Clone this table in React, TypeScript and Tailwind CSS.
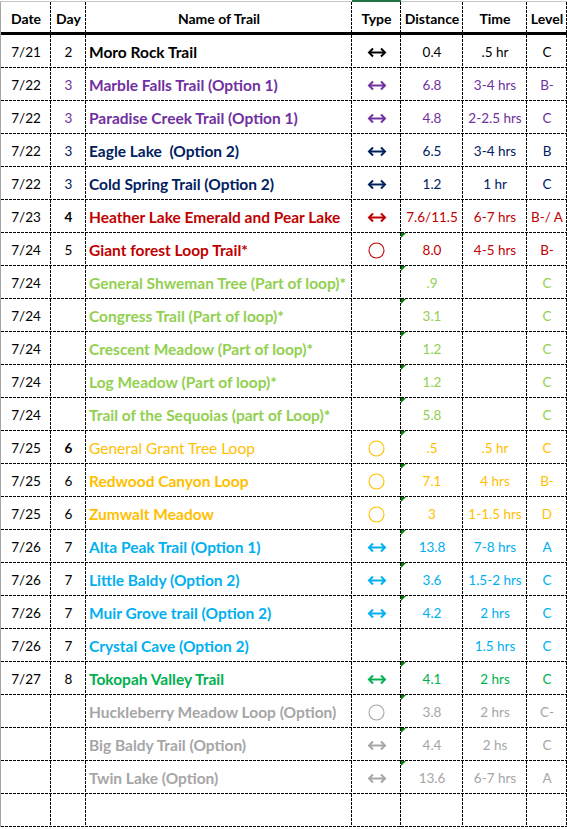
import React from "react";

type Row = {
  date?: string;
  day?: string;
  dayColor?: string;
  dayBold?: boolean;
  name?: string;
  nameNormal?: boolean;
  type?: "arrow" | "circle";
  dist?: string;
  time?: string;
  level?: string;
  color: string;
  tri?: boolean;
};

const PURPLE = "#7030A0";
const NAVY = "#002060";
const RED = "#C00000";
const LGREEN = "#92D050";
const GOLD = "#FFC000";
const LBLUE = "#00B0F0";
const GREEN = "#00B050";
const GREY = "#A6A6A6";

const rows: Row[] = [
  { date: "7/21", day: "2", dayColor: "#000", name: "Moro Rock Trail", type: "arrow", dist: "0.4", time: ".5 hr", level: "C", color: "#000" },
  { date: "7/22", day: "3", dayColor: PURPLE, name: "Marble Falls Trail (Option 1)", type: "arrow", dist: "6.8", time: "3-4 hrs", level: "B-", color: PURPLE },
  { date: "7/22", day: "3", dayColor: PURPLE, name: "Paradise Creek Trail (Option 1)", type: "arrow", dist: "4.8", time: "2-2.5 hrs", level: "C", color: PURPLE },
  { date: "7/22", day: "3", dayColor: NAVY, name: "Eagle Lake  (Option 2)", type: "arrow", dist: "6.5", time: "3-4 hrs", level: "B", color: NAVY },
  { date: "7/22", day: "3", dayColor: NAVY, name: "Cold Spring Trail (Option 2)", type: "arrow", dist: "1.2", time: "1 hr", level: "C", color: NAVY },
  { date: "7/23", day: "4", dayColor: "#000", dayBold: true, name: "Heather Lake Emerald and Pear Lake", type: "arrow", dist: "7.6/11.5", time: "6-7 hrs", level: "B-/ A", color: RED },
  { date: "7/24", day: "5", dayColor: "#000", name: "Giant forest Loop Trail*", type: "circle", dist: "8.0", time: "4-5 hrs", level: "B-", color: RED, tri: true },
  { date: "7/24", name: "General Shweman Tree (Part of loop)*", dist: ".9", level: "C", color: LGREEN, tri: true },
  { date: "7/24", name: "Congress Trail (Part of loop)*", dist: "3.1", level: "C", color: LGREEN, tri: true },
  { date: "7/24", name: "Crescent Meadow (Part of loop)*", dist: "1.2", level: "C", color: LGREEN, tri: true },
  { date: "7/24", name: "Log Meadow (Part of loop)*", dist: "1.2", level: "C", color: LGREEN, tri: true },
  { date: "7/24", name: "Trail of the Sequoias (part of Loop)*", dist: "5.8", level: "C", color: LGREEN, tri: true },
  { date: "7/25", day: "6", dayColor: "#000", dayBold: true, name: "General Grant Tree Loop", nameNormal: true, type: "circle", dist: ".5", time: ".5 hr", level: "C", color: GOLD, tri: true },
  { date: "7/25", day: "6", dayColor: "#000", name: "Redwood Canyon Loop", type: "circle", dist: "7.1", time: "4 hrs", level: "B-", color: GOLD, tri: true },
  { date: "7/25", day: "6", dayColor: "#000", name: "Zumwalt Meadow", type: "circle", dist: "3", time: "1-1.5 hrs", level: "D", color: GOLD, tri: true },
  { date: "7/26", day: "7", dayColor: "#000", name: "Alta Peak Trail (Option 1)", type: "arrow", dist: "13.8", time: "7-8 hrs", level: "A", color: LBLUE, tri: true },
  { date: "7/26", day: "7", dayColor: "#000", name: "Little Baldy (Option 2)", type: "arrow", dist: "3.6", time: "1.5-2 hrs", level: "C", color: LBLUE, tri: true },
  { date: "7/26", day: "7", dayColor: "#000", name: "Muir Grove trail (Option 2)", type: "arrow", dist: "4.2", time: "2 hrs", level: "C", color: LBLUE, tri: true },
  { date: "7/26", day: "7", dayColor: "#000", name: "Crystal Cave (Option 2)", time: "1.5 hrs", level: "C", color: LBLUE },
  { date: "7/27", day: "8", dayColor: "#000", name: "Tokopah Valley Trail", type: "arrow", dist: "4.1", time: "2 hrs", level: "C", color: GREEN, tri: true },
  { name: "Huckleberry Meadow Loop (Option)", type: "circle", dist: "3.8", time: "2 hrs", level: "C-", color: GREY, tri: true },
  { name: "Big Baldy Trail (Option)", type: "arrow", dist: "4.4", time: "2 hs", level: "C", color: GREY, tri: true },
  { name: "Twin Lake (Option)", type: "arrow", dist: "13.6", time: "6-7 hrs", level: "A", color: GREY, tri: true },
  { color: "#000" },
];

const vline =
  "bg-[image:repeating-linear-gradient(to_bottom,#000_0_3px,transparent_3px_4px)] bg-[length:1px_100%] bg-right bg-no-repeat";
const hline =
  "bg-[image:repeating-linear-gradient(to_right,#000_0_3px,transparent_3px_4px)] bg-[length:100%_1px] bg-bottom bg-no-repeat";

function Arrow({ color }: { color: string }) {
  return (
    <svg width="20" height="11" viewBox="0 0 20 11" fill="none" stroke={color} strokeWidth="2" strokeLinecap="butt" strokeLinejoin="miter">
      <line x1="2" y1="5.5" x2="18" y2="5.5" />
      <polyline points="6,1.5 2,5.5 6,9.5" />
      <polyline points="14,1.5 18,5.5 14,9.5" />
    </svg>
  );
}

function Circle({ color }: { color: string }) {
  return (
    <svg width="17" height="17" viewBox="0 0 17 17" fill="none" stroke={color} strokeWidth="1.1">
      <circle cx="8.5" cy="8.5" r="7.5" />
    </svg>
  );
}

const colCls = {
  date: "w-[50px]",
  day: "w-[35px]",
  name: "w-[266px]",
  type: "w-[49px]",
  dist: "w-[62px]",
  time: "w-[64px]",
  level: "w-[40px]",
};

export default function App() {
  return (
    <div
      className="w-[567px] h-[829px] bg-white overflow-hidden text-[13.5px] leading-none"
      style={{ fontFamily: "Lato, 'Open Sans', sans-serif" }}
    >
      {/* top strip */}
      <div className="flex h-[2px]">
        <div className="w-[352px] border-b border-[#c6c6c6]" />
        <div className="w-[49px] bg-[#217346]" />
        <div className="flex-1 border-b border-[#c6c6c6]" />
      </div>
      <div className="border-l border-[#a6a6a6]">
        {/* header */}
        <div className="flex h-[33px] border-b-[3px] border-black font-bold text-black text-[14px]">
          <div className={`${colCls.date} ${vline} flex items-center justify-center pt-[3px]`}>Date</div>
          <div className={`${colCls.day} ${vline} flex items-center justify-center pt-[3px]`}>Day</div>
          <div className={`${colCls.name} ${vline} flex items-center justify-center pt-[3px]`}>Name of Trail</div>
          <div className={`${colCls.type} ${vline} flex items-center justify-center pt-[3px]`}>Type</div>
          <div className={`${colCls.dist} ${vline} flex items-center justify-center pt-[3px]`}>Distance</div>
          <div className={`${colCls.time} ${vline} flex items-center justify-center pt-[3px]`}>Time</div>
          <div className={`${colCls.level} ${vline} flex items-center justify-center pt-[3px]`}>Level</div>
        </div>
        {rows.map((r, i) => (
          <div key={i} className={`flex h-[33px] ${hline}`}>
            <div className={`${colCls.date} ${vline} flex items-center justify-center pt-[2px] text-black`}>{r.date}</div>
            <div
              className={`${colCls.day} ${vline} flex items-center justify-center pt-[2px] ${r.dayBold ? "font-bold" : ""}`}
              style={{ color: r.dayColor }}
            >
              {r.day}
            </div>
            <div
              className={`${colCls.name} ${vline} flex items-center pl-[3px] pt-[2px] whitespace-pre text-[15.5px] ${r.nameNormal ? "font-normal" : "font-bold"}`}
              style={{ color: r.color }}
            >
              {r.name}
            </div>
            <div className={`${colCls.type} ${vline} flex items-center justify-center pt-[1px]`}>
              {r.type === "arrow" && <Arrow color={r.color} />}
              {r.type === "circle" && <Circle color={r.color} />}
            </div>
            <div className={`${colCls.dist} ${vline} relative flex items-center justify-center pt-[2px]`} style={{ color: r.color }}>
              {r.tri && (
                <span className="absolute left-0 top-0 h-0 w-0 border-t-[5px] border-r-[5px] border-t-[#008000] border-r-transparent" />
              )}
              {r.dist}
            </div>
            <div className={`${colCls.time} ${vline} flex items-center justify-center pt-[2px]`} style={{ color: r.color }}>
              {r.time}
            </div>
            <div className={`${colCls.level} ${vline} flex items-center justify-center pt-[2px]`} style={{ color: r.color }}>
              {r.level}
            </div>
          </div>
        ))}
      </div>
    </div>
  );
}
